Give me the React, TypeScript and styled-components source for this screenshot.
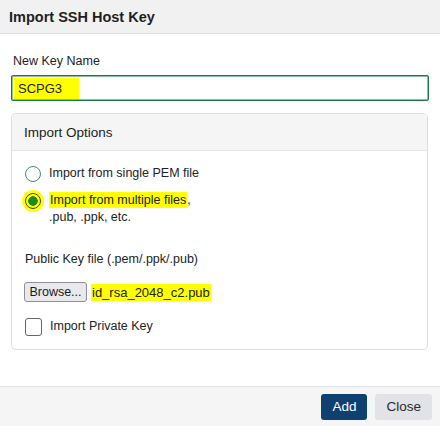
import styled, { createGlobalStyle } from "styled-components";

const GlobalStyle = createGlobalStyle`
  html, body {
    margin: 0;
    padding: 0;
    background: #ffffff;
  }
  body {
    font-family: "Liberation Sans", Arial, sans-serif;
    color: #222222;
  }
`;

const App = () => {
  return (
    <>
      <GlobalStyle />
      <Dialog>
        <Header>Import SSH Host Key</Header>
        <Body>
          <FieldLabel>New Key Name</FieldLabel>
          <NameInput>
            <Marked>SCPG3</Marked>
          </NameInput>
          <Panel>
            <PanelHeader>Import Options</PanelHeader>
            <PanelBody>
              <OptionRow>
                <Radio />
                <OptionText>Import from single PEM file</OptionText>
              </OptionRow>
              <OptionRow $top={11}>
                <Radio $checked />
                <OptionText>
                  <Marked $tight>Import from multiple files</Marked>,
                  <br />
                  .pub, .ppk, etc.
                </OptionText>
              </OptionRow>
              <FileLabel>Public Key file (.pem/.ppk/.pub)</FileLabel>
              <FileRow>
                <BrowseButton>Browse...</BrowseButton>
                <Marked $tight>id_rsa_2048_c2.pub</Marked>
              </FileRow>
              <OptionRow $top={17}>
                <Checkbox />
                <OptionText>Import Private Key</OptionText>
              </OptionRow>
            </PanelBody>
          </Panel>
        </Body>
        <Footer>
          <Button $primary>Add</Button>
          <Button>Close</Button>
        </Footer>
      </Dialog>
    </>
  );
};

export default App;

const Dialog = styled.div`
  width: 440px;
  height: 426px;
  display: flex;
  flex-direction: column;
  background: #ffffff;
`;

const Header = styled.div`
  height: 33px;
  display: flex;
  align-items: center;
  padding-left: 9px;
  background: #f1f1f1;
  border-bottom: 1px solid #dedede;
  font-size: 14.5px;
  font-weight: bold;
  color: #1f1f1f;
`;

const Body = styled.div`
  flex: 1;
  display: flex;
  flex-direction: column;
  padding: 19px 11px 0 11px;
`;

const FieldLabel = styled.div`
  font-size: 12.5px;
  line-height: 16px;
  margin-left: 2px;
  margin-bottom: 6px;
`;

const NameInput = styled.div`
  height: 26px;
  box-sizing: border-box;
  border: 1px solid #1b7a4c;
  box-shadow: inset 0 0 0 0.5px #1b7a4c;
  border-radius: 2px;
  display: flex;
  align-items: center;
  padding-left: 2px;
  font-size: 13px;
`;

const Marked = styled.span<{ $tight?: boolean }>`
  background: #ffff00;
  padding: ${(p) => (p.$tight ? "1px 1px" : "3px 17px 3px 4px")};
`;

const Panel = styled.div`
  margin-top: 12px;
  width: 417px;
  height: 237px;
  box-sizing: border-box;
  border: 1px solid #dddddf;
  border-radius: 5px;
  display: flex;
  flex-direction: column;
  overflow: hidden;
`;

const PanelHeader = styled.div`
  height: 36px;
  display: flex;
  align-items: center;
  padding-left: 12px;
  background: #f5f5f5;
  border-bottom: 1px solid #e4e4e4;
  font-size: 13.5px;
  color: #222222;
`;

const PanelBody = styled.div`
  display: flex;
  flex-direction: column;
  padding: 15px 12px 0 13px;
`;

const OptionRow = styled.div<{ $top?: number }>`
  display: flex;
  align-items: flex-start;
  gap: 8px;
  margin-top: ${(p) => p.$top ?? 0}px;
`;

const Radio = styled.span<{ $checked?: boolean }>`
  width: 16px;
  height: 16px;
  box-sizing: border-box;
  flex-shrink: 0;
  border-radius: 50%;
  border: 1px solid ${(p) => (p.$checked ? "#3c4a12" : "#3e8f70")};
  background: ${(p) =>
    p.$checked
      ? "radial-gradient(circle, #1f8a1f 0 4.5px, #ffff00 5px 8px)"
      : "#ffffff"};
  box-shadow: ${(p) => (p.$checked ? "0 0 0 3px #ffff00" : "none")};
`;

const OptionText = styled.span`
  font-size: 12.5px;
  line-height: 17px;
  margin-top: -1px;
`;

const FileLabel = styled.div`
  font-size: 12.5px;
  line-height: 16px;
  margin-top: 25px;
`;

const FileRow = styled.div`
  display: flex;
  align-items: center;
  gap: 4px;
  margin-top: 15px;
  margin-left: -1px;
  font-size: 13px;
`;

const BrowseButton = styled.span`
  width: 63px;
  height: 20px;
  box-sizing: border-box;
  display: flex;
  align-items: center;
  justify-content: center;
  background: #e9e9ed;
  border: 1px solid #8f8f9d;
  border-radius: 3px;
  font-size: 12.5px;
  color: #1a1a1a;
`;

const Checkbox = styled.span`
  width: 17px;
  height: 18px;
  box-sizing: border-box;
  flex-shrink: 0;
  border: 1px solid #666666;
  border-radius: 3px;
  background: #ffffff;
  margin-top: -1px;
`;

const Footer = styled.div`
  height: 40px;
  box-sizing: border-box;
  display: flex;
  align-items: center;
  justify-content: flex-end;
  gap: 8px;
  padding-right: 8px;
  background: #f5f5f5;
  border-top: 1px solid #e2e2e6;
`;

const Button = styled.span<{ $primary?: boolean }>`
  height: 26px;
  display: flex;
  align-items: center;
  padding: 0 11px;
  border-radius: 3px;
  font-size: 13.5px;
  background: ${(p) => (p.$primary ? "#0f4170" : "#e1e3e7")};
  color: ${(p) => (p.$primary ? "#ffffff" : "#2a2a2a")};
`;
